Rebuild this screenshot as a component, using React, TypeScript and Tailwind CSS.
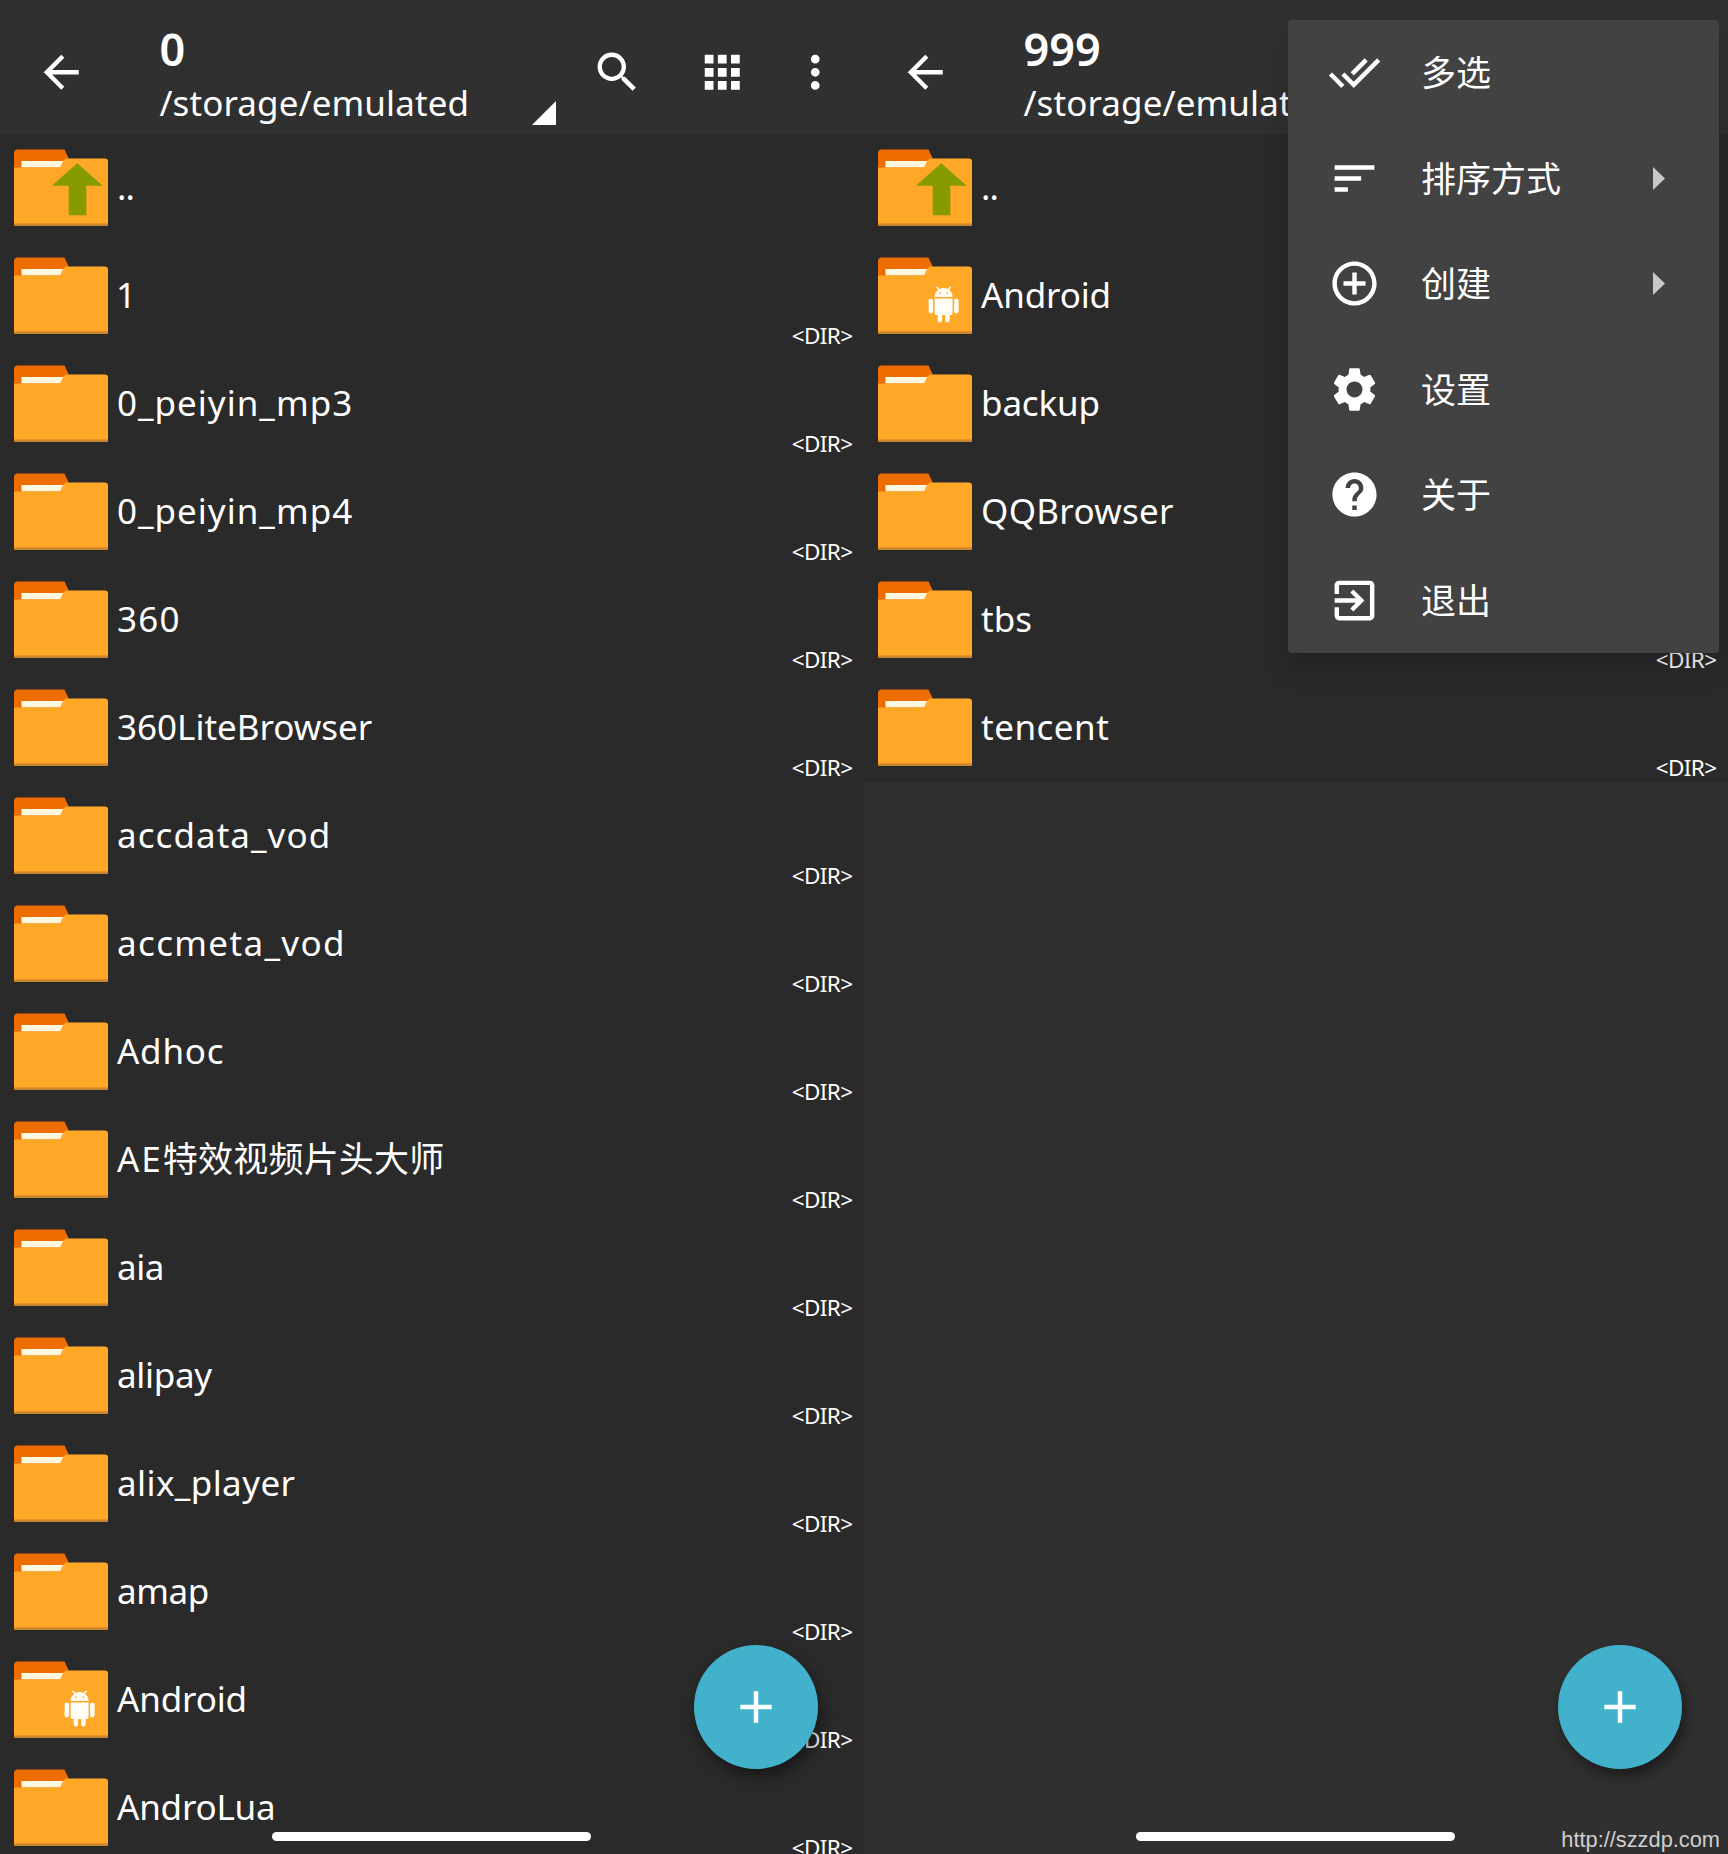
import type { ReactNode } from "react";
import {
  MdAdd,
  MdAddCircleOutline,
  MdApps,
  MdArrowBack,
  MdDoneAll,
  MdExitToApp,
  MdHelp,
  MdMoreVert,
  MdSearch,
  MdSettings,
  MdSort,
} from "react-icons/md";

type Kind = "up" | "android" | "plain";

interface Entry {
  name: string;
  label?: ReactNode;
  kind?: Kind;
  tracking?: string;
}

const leftEntries: Entry[] = [
  { name: "..", kind: "up", tracking: "tracking-[-1px]" },
  { name: "1", tracking: "-indent-[1px]" },
  { name: "0_peiyin_mp3", tracking: "tracking-[1px]" },
  { name: "0_peiyin_mp4", tracking: "tracking-[1px]" },
  { name: "360", tracking: "tracking-[1.2px]" },
  { name: "360LiteBrowser" },
  { name: "accdata_vod", tracking: "tracking-[1.05px]" },
  { name: "accmeta_vod", tracking: "tracking-[1.35px]" },
  { name: "Adhoc", tracking: "tracking-[0.75px]" },
  {
    name: "AE特效视频片头大师",
    label: (
      <>
        <span className="tracking-[2px]">AE</span>特效视频片头大师
      </>
    ),
    tracking: "tracking-[0.2px]",
  },
  { name: "aia", tracking: "tracking-[-0.5px]" },
  { name: "alipay", tracking: "tracking-[-0.3px]" },
  { name: "alix_player", tracking: "tracking-[0.4px]" },
  { name: "amap", tracking: "tracking-[-0.4px]" },
  { name: "Android", kind: "android", tracking: "tracking-[-0.15px]" },
  { name: "AndroLua", tracking: "tracking-[-0.2px]" },
];

const rightEntries: Entry[] = [
  { name: "..", kind: "up", tracking: "tracking-[-1px]" },
  { name: "Android", kind: "android", tracking: "tracking-[-0.15px]" },
  { name: "backup", tracking: "tracking-[-0.15px]" },
  { name: "QQBrowser", tracking: "tracking-[0.3px]" },
  { name: "tbs" },
  { name: "tencent", tracking: "tracking-[0.5px]" },
];

function Folder({ kind = "plain" }: { kind?: Kind }) {
  return (
    <svg width="94" height="77" viewBox="0 0 94 77" className="mt-[15px] ml-[14px] shrink-0">
      <path d="M0 24V4Q0 0.500 4 0.500H50.500L55 10V24Z" fill="#ef6c00" />
      <path d="M7.500 12H50V18.500H7.500Z" fill="#fff8e1" />
      <path d="M0 18.500H44.500Q46.500 18.500 47.500 15.500L49 12Q50.500 9.500 53 9.500H91Q94 9.500 94 12.500V77H0Z" fill="#ffa726" />
      <path d="M0 74.500H94V77H0Z" fill="#c7842b" />
      {kind === "up" && (
        <path d="M63.300 14.300L88.700 36.700H72.300V66.300H54.700V36.700H37.700Z" fill="#869b00" />
      )}
      {kind === "android" && (
        <path
          transform="translate(47.600 29.500) scale(1.500)"
          fill="#fffdf5"
          d="M6 18c0 .55.45 1 1 1h1v3.500c0 .83.67 1.500 1.500 1.500s1.500-.67 1.500-1.500V19h2v3.500c0 .83.67 1.500 1.500 1.500s1.500-.67 1.500-1.500V19h1c.55 0 1-.45 1-1V8H6v10zM3.500 8C2.670 8 2 8.670 2 9.500v7c0 .83.67 1.500 1.500 1.500S5 17.330 5 16.500v-7C5 8.670 4.330 8 3.500 8zm17 0c-.83 0-1.500.67-1.500 1.500v7c0 .83.67 1.500 1.500 1.500s1.500-.67 1.500-1.500v-7c0-.83-.67-1.500-1.500-1.500zm-4.970-5.840l1.300-1.300c.2-.2.2-.51 0-.71-.2-.2-.51-.2-.71 0l-1.480 1.480C13.850 1.230 12.950 1 12 1c-.96 0-1.860.23-2.660.63L7.850.15c-.2-.2-.51-.2-.71 0-.2.2-.2.51 0 .71l1.310 1.310C6.970 3.260 6 5.010 6 7h12c0-1.990-.97-3.750-2.470-4.840zM10 5H9V4h1v1zm5 0h-1V4h1v1z"
        />
      )}
    </svg>
  );
}

function Row({ entry }: { entry: Entry }) {
  return (
    <li className="flex h-[108px] shrink-0">
      <Folder kind={entry.kind} />
      <span className={`ml-[9px] flex-1 text-[35px] leading-[106px] whitespace-nowrap ${entry.tracking ?? ""}`}>
        {entry.label ?? entry.name}
      </span>
      {entry.kind !== "up" && (
        <span className="mr-[11.5px] -mb-px self-end text-[22.5px] leading-[30px] tracking-[-0.6px]">&lt;DIR&gt;</span>
      )}
    </li>
  );
}

function Header({ title, actions }: { title: string; actions?: boolean }) {
  return (
    <header className="flex h-[134px] shrink-0 bg-[#303030]">
      <MdArrowBack className="mt-[46px] ml-[35px] size-[52.5px] shrink-0" />
      <div className="relative ml-[72px] flex h-[134px] w-[398px] shrink-0 flex-col">
        <span className="mt-[18px] h-[62px] text-[45px] leading-[62px] font-semibold">{title}</span>
        <span className="text-[35px] leading-[45px] tracking-[0.1px]">/storage/emulated</span>
        <svg width="24" height="24" viewBox="0 0 24 24" className="absolute top-[101px] right-0.5">
          <path d="M0 24L24 0V24Z" fill="#fff" />
        </svg>
      </div>
      {actions && (
        <div className="mt-[46px] flex h-[53px] items-center">
          <MdSearch className="ml-[33px] size-[52.5px]" />
          <MdApps className="ml-[52.5px] size-[52.5px]" />
          <MdMoreVert className="ml-[40.5px] size-[52.5px]" />
        </div>
      )}
    </header>
  );
}

function Fab() {
  return (
    <button className="absolute top-[1645px] left-[694px] flex size-[124px] items-center justify-center rounded-full bg-[#42b1cc] shadow-[3px_7px_14px_rgba(0,0,0,0.45)]">
      <MdAdd className="size-[54px]" />
    </button>
  );
}

function HomeBar() {
  return <div className="absolute top-[1832px] left-[272px] h-[9px] w-[319px] rounded-full bg-white" />;
}

function Panel({
  title,
  entries,
  actions,
  children,
}: {
  title: string;
  entries: Entry[];
  actions?: boolean;
  children?: ReactNode;
}) {
  return (
    <section className="relative flex h-[1854px] w-[864px] shrink-0 flex-col overflow-hidden bg-[#303030]">
      <Header title={title} actions={actions} />
      <ul className="flex flex-col bg-[#2a2a2a]">
        {entries.map((entry) => (
          <Row key={entry.name} entry={entry} />
        ))}
      </ul>
      <Fab />
      <HomeBar />
      {children}
    </section>
  );
}

const menuItems = [
  { label: "多选", Icon: MdDoneAll },
  { label: "排序方式", Icon: MdSort, submenu: true },
  { label: "创建", Icon: MdAddCircleOutline, submenu: true },
  { label: "设置", Icon: MdSettings },
  { label: "关于", Icon: MdHelp },
  { label: "退出", Icon: MdExitToApp },
];

function OverflowMenu() {
  return (
    <div className="absolute top-5 left-[424px] flex w-[431px] flex-col rounded-[4px] bg-[#424242] shadow-[0_14px_28px_rgba(0,0,0,0.2)]">
      {menuItems.map(({ label, Icon, submenu }) => (
        <div key={label} className="flex h-[105.5px] items-center pl-[40px]">
          <Icon className="size-[53px]" />
          <span className="ml-10 flex-1 pt-px text-[35px] leading-[50px]">{label}</span>
          {submenu && (
            <svg width="12" height="23" viewBox="0 0 12 23" className="mr-[54px]">
              <path d="M0 0L12 11.500L0 23Z" fill="#c8c8c8" />
            </svg>
          )}
        </div>
      ))}
    </div>
  );
}

export default function App() {
  return (
    <main className="flex h-[1854px] w-[1728px] overflow-hidden bg-[#303030] font-['Noto_Sans','Noto_Sans_CJK_SC',sans-serif] text-white">
      <Panel title="0" entries={leftEntries} actions />
      <Panel title="999" entries={rightEntries}>
        <OverflowMenu />
        <span className="absolute right-[8px] bottom-px font-['Liberation_Sans',sans-serif] text-[21.8px] leading-[26px] text-[#cfcfcf]">
          http://szzdp.com
        </span>
      </Panel>
    </main>
  );
}
